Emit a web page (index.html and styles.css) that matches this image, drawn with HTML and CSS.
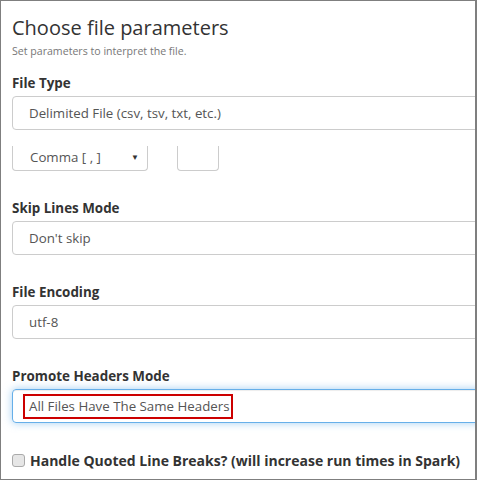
FILE: index.html
```html
<!DOCTYPE html>
<html>
<head>
<meta charset="utf-8">
<link rel="stylesheet" href="styles.css">
</head>
<body>
<div class="frame">
  <h1 class="title">Choose file parameters</h1>
  <p class="subtitle">Set parameters to interpret the file.</p>

  <div class="group first">
    <div class="label">File Type</div>
    <div class="input">Delimited File (csv, tsv, txt, etc.)</div>
    <div class="subrow">
      <div class="select-box">Comma [ , ]<span class="caret">▼</span></div>
      <div class="small-box"></div>
    </div>
  </div>

  <div class="group after-sub">
    <div class="label">Skip Lines Mode</div>
    <div class="input">Don't skip</div>
  </div>

  <div class="group">
    <div class="label">File Encoding</div>
    <div class="input">utf-8</div>
  </div>

  <div class="group">
    <div class="label">Promote Headers Mode</div>
    <div class="input focus"><span class="highlight">All Files Have The Same Headers</span></div>
  </div>

  <div class="check-row">
    <span class="checkbox"></span>
    <span class="check-label">Handle Quoted Line Breaks? (will increase run times in Spark)</span>
  </div>
</div>
</body>
</html>
```

FILE: styles.css
```css
html, body {
  margin: 0;
  padding: 0;
  background: #fff;
}
.frame {
  box-sizing: border-box;
  width: 477px;
  height: 480px;
  border-top: 1px solid #7f7f7f;
  border-left: 1px solid #7f7f7f;
  border-right: 2px solid #7f7f7f;
  border-bottom: 1px solid #7f7f7f;
  overflow: hidden;
  padding-left: 11px;
  font-family: "Open Sans", "Noto Sans", sans-serif;
  color: #333;
}
.title {
  margin: 13px 0 0 0;
  font-size: 20px;
  line-height: 28px;
  font-weight: 400;
  color: #333;
}
.subtitle {
  margin: 2px 0 0 0;
  font-size: 10.6px;
  line-height: 14px;
  color: #777;
}
.group {
  margin-top: 28px;
}
.group.first {
  margin-top: 16px;
}
.group.after-sub {
  margin-top: 28px;
}
.label {
  font-size: 13.4px;
  font-weight: 700;
  line-height: 18px;
  color: #333;
}
.input {
  box-sizing: border-box;
  margin-top: 4px;
  width: 500px;
  height: 34px;
  border: 1px solid #ccc;
  border-radius: 4px;
  padding-left: 16px;
  font-size: 13.3px;
  line-height: 32px;
  color: #555;
}
.input.focus {
  border-color: #66afe9;
  box-shadow: inset 0 1px 1px rgba(0,0,0,.075), 0 0 8px rgba(102,175,233,.6);
  padding-left: 10px;
  display: flex;
  align-items: center;
}
.highlight {
  box-sizing: border-box;
  border: 2px solid #cc0000;
  padding: 0 1px 0 4px;
  height: 25px;
  line-height: 21px;
}
.subrow {
  display: flex;
  gap: 29px;
  margin-top: 16px;
}
.select-box {
  box-sizing: border-box;
  width: 136px;
  height: 25px;
  border: 1px solid #ccc;
  border-top: none;
  border-radius: 0 0 4px 4px;
  padding-left: 17px;
  padding-right: 8px;
  font-size: 13.3px;
  line-height: 22px;
  color: #555;
  display: flex;
  justify-content: space-between;
}
.caret {
  font-size: 8px;
  color: #333;
}
.small-box {
  box-sizing: border-box;
  width: 42px;
  height: 25px;
  border: 1px solid #ccc;
  border-top: none;
  border-radius: 0 0 4px 4px;
}
.check-row {
  display: flex;
  align-items: center;
  gap: 5px;
  margin-top: 28px;
}
.checkbox {
  box-sizing: border-box;
  width: 13px;
  height: 13px;
  border: 1px solid #aaa;
  border-radius: 3px;
  background: #e6e6e6;
}
.check-label {
  font-size: 14px;
  font-weight: 700;
  color: #333;
}
```
